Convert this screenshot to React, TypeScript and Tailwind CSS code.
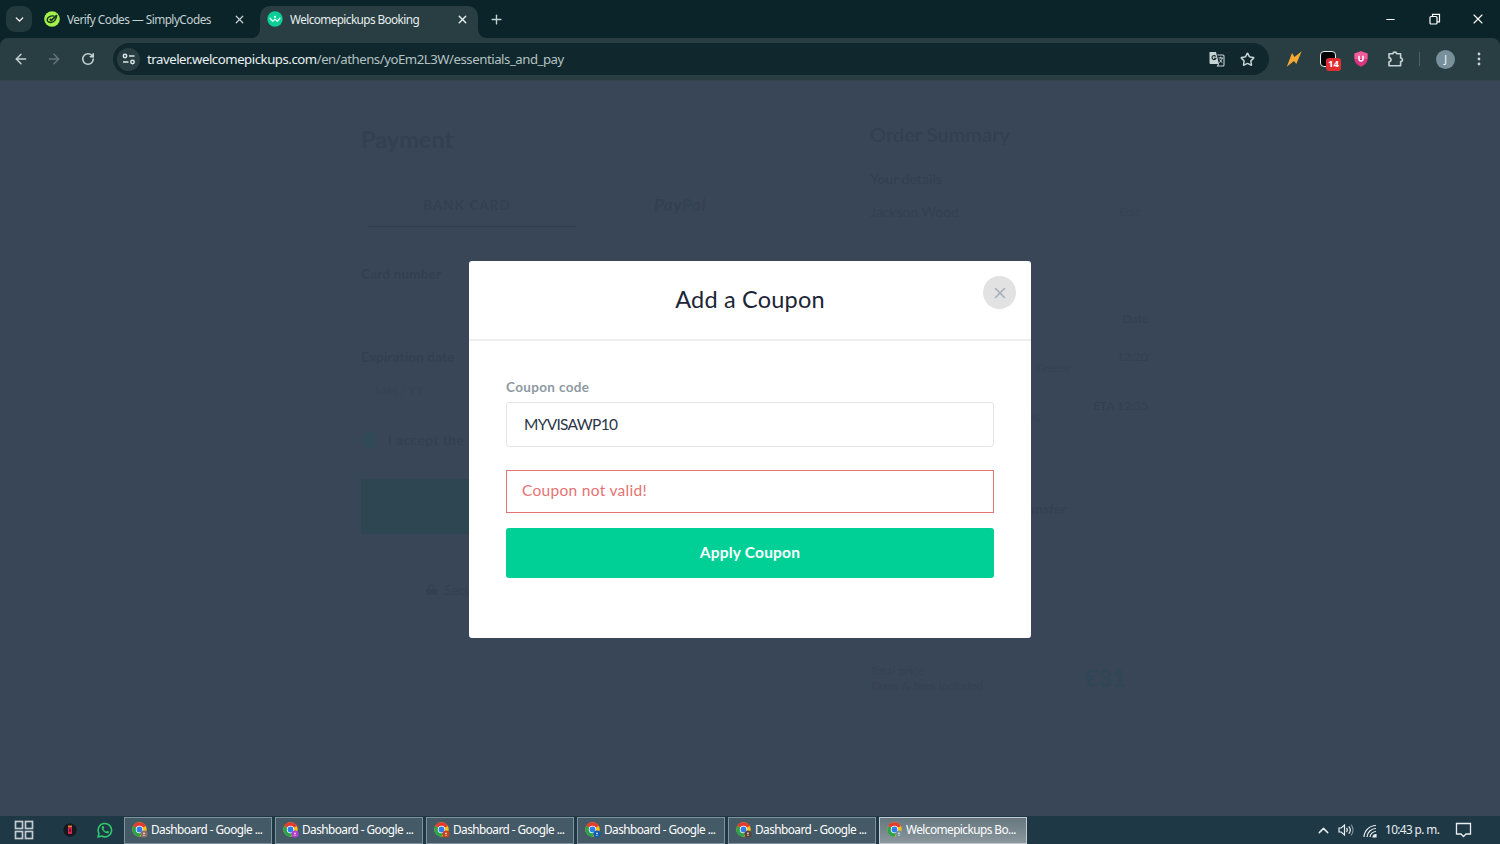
import type { ReactNode } from "react";
import { ArrowLeft, ArrowRight, ChevronDown, ChevronUp, Minus, Plus, RotateCw, Star, X } from "lucide-react";

const windows = [
  { title: "Dashboard - Google ...", badge: "#8d6e63" },
  { title: "Dashboard - Google ...", badge: "#b23bd0" },
  { title: "Dashboard - Google ...", badge: "#c8401c" },
  { title: "Dashboard - Google ...", badge: "#0b5cad" },
  { title: "Dashboard - Google ...", badge: "#5d4037" },
  { title: "Welcomepickups Bo...", badge: "#78909c", active: true },
];

function ChromeIcon({ badge }: { badge: string }) {
  return (
    <svg width="16" height="16" viewBox="0 0 16 16" className="shrink-0">
      <circle cx="7.5" cy="7.5" r="7.2" fill="#fbc116" />
      <path d="M7.5 7.5 1.2 4A7.2 7.2 0 0 1 13.8 4Z" fill="#e33b2e" />
      <path d="M7.5 7.5 1.2 4A7.2 7.2 0 0 0 7.5 14.7L10.5 9.2Z" fill="#2ba24c" />
      <circle cx="7.5" cy="7.5" r="3.7" fill="#fff" />
      <circle cx="7.5" cy="7.5" r="2.9" fill="#2f7de9" />
      <circle cx="12" cy="12" r="3.6" fill={badge} />
      <circle cx="12" cy="11.3" r="0.9" fill="#e8e0dc" />
      <path d="M10.5 13.5a1.600 1.300 0 0 1 3 0Z" fill="#e8e0dc" />
    </svg>
  );
}

function SimplyCodesIcon() {
  return (
    <svg width="16" height="16" viewBox="0 0 16 16" className="shrink-0">
      <circle cx="8" cy="8" r="7.8" fill="#a6f04a" />
      <path d="M10.500 5.200C7 4.200 3.300 6 3.200 8.700c0 2.800 4 3.500 6.500 1.800C12 9 12.200 7.200 12.600 4.600" fill="none" stroke="#14351f" strokeWidth="1.400" />
      <path d="m5.800 7.800 1.400 1.700L13 4.200" fill="none" stroke="#14351f" strokeWidth="1.700" />
    </svg>
  );
}

function WelcomeIcon() {
  return (
    <svg width="16" height="16" viewBox="0 0 16 16" className="shrink-0">
      <circle cx="8" cy="8" r="7.700" fill="#0bce96" />
      <path d="M3 7.200 5.700 10.300 8 8.200l2.300 2.100L13 7.200" fill="none" stroke="#d5fff0" strokeWidth="1.300" strokeLinecap="round" strokeLinejoin="round" />
      <circle cx="8" cy="5.900" r="1.100" fill="#d5fff0" />
    </svg>
  );
}

function TabStrip() {
  return (
    <div className="flex h-[38px] items-start bg-[#0a2429] text-[11.800px] text-[#c3d0d2]">
      <button className="mt-[6px] ml-[6px] flex h-[26px] w-[26px] items-center justify-center rounded-[9px] bg-[#22393d]">
        <ChevronDown size={13} strokeWidth={2.500} className="text-white" />
      </button>
      <div className="flex h-[38px] w-[219px] items-center pl-[12px]">
        <SimplyCodesIcon />
        <span className="mt-px ml-[7px] grow whitespace-nowrap tracking-[-0.530px]">Verify Codes — SimplyCodes</span>
        <X size={13} strokeWidth={2.300} className="mr-[5px]" />
      </div>
      <svg width="9" height="32" viewBox="0 0 9 32" className="mt-[6px]">
        <path d="M9 22v10H0c6 0 9-4 9-10Z" fill="#293e42" />
      </svg>
      <div className="mt-[6px] flex h-[32px] w-[218px] items-center rounded-t-[10px] bg-[#293e42] pb-[6px] pl-[7px] text-[#e6eeef]">
        <WelcomeIcon />
        <span className="mt-px ml-[7px] grow whitespace-nowrap tracking-[-0.600px]">Welcomepickups Booking</span>
        <X size={13} strokeWidth={2.500} className="mr-[9px]" />
      </div>
      <svg width="9" height="32" viewBox="0 0 9 32" className="mt-[6px]">
        <path d="M0 22v10h9c-6 0-9-4-9-10Z" fill="#293e42" />
      </svg>
      <Plus size={15} strokeWidth={2.200} className="mt-[12px] ml-[2px]" />
      <div className="ml-auto flex h-[38px] items-center text-white">
        <Minus size={13} strokeWidth={1.800} />
        <svg width="12" height="12" viewBox="0 0 12 12" className="ml-[32px]" fill="none" stroke="currentColor" strokeWidth="1.200">
          <rect x="1" y="3.500" width="7" height="7.500" rx="1" />
          <path d="M3.500 3.500V1.300h7v7.500H8" />
        </svg>
        <X size={16} strokeWidth={1.700} className="mr-[14px] ml-[29px]" />
      </div>
    </div>
  );
}

function Toolbar() {
  return (
    <div className="bg-[#0a2429]">
      <div className="flex h-[43px] items-center rounded-t-[8px] border-b border-[#34454c] bg-[#293e42] text-[#c6d2d4]">
        <ArrowLeft size={16} strokeWidth={2.200} className="ml-[13px]" />
        <ArrowRight size={16} strokeWidth={2.200} className="ml-[17px] text-[#64767a]" />
        <RotateCw size={14} strokeWidth={2.700} className="ml-[19px]" />
        <div className="ml-[18px] flex h-[32px] w-[1156px] items-center rounded-full bg-[#10282d] pl-[4px]">
          <div className="flex h-[23px] w-[23px] items-center justify-center rounded-full bg-[#293e42]">
            <svg width="14" height="12" viewBox="0 0 14 12" fill="none" stroke="#dce6e7" strokeWidth="1.500">
              <circle cx="3" cy="3" r="1.700" />
              <path d="M7 3h5.500M1 9h5.500" />
              <circle cx="10.500" cy="9" r="1.700" />
            </svg>
          </div>
          <p className="mt-px ml-[7px] text-[13.200px] tracking-[-0.460px] whitespace-nowrap text-[#b5c1c3]">
            <span className="text-[#e9f0f1]">traveler.welcomepickups.com</span>/en/athens/yoEm2L3W/essentials_and_pay
          </p>
          <svg width="16" height="16" viewBox="0 0 16 16" className="ml-auto">
            <path d="M.5 1h6.500l3 12H1.500a1 1 0 0 1-1-1Z" fill="#c6d2d4" />
            <path d="M6.700 5.500A2 2 0 1 0 6.900 7.300H5" fill="none" stroke="#10282d" strokeWidth="1.100" />
            <path d="M8.500 4H14a1 1 0 0 1 1 1v9a1 1 0 0 1-1 1H8.500l1-2" fill="none" stroke="#c6d2d4" strokeWidth="1.100" />
            <path d="M9.500 7h4.500M11.700 5.800V7M13.200 7c-.5 2.200-1.600 3.700-3 4.600M10.700 8.500c.7 1.300 1.600 2.400 2.800 3.300" fill="none" stroke="#c6d2d4" />
          </svg>
          <Star size={15} strokeWidth={2.400} className="mr-[14px] ml-[15px]" />
        </div>
        <svg width="16" height="16" viewBox="0 0 16 16" className="ml-[17px]">
          <path d="M6 2 .8 15.700 8 10l2.300 3L15.700.300 8.500 6Z" fill="#f4a933" />
        </svg>
        <div className="relative ml-[18px] h-[16px] w-[16px] rounded-[4px] border border-[#e9eded] bg-black">
          <span className="absolute top-[6px] left-[5px] flex h-[13px] w-[15px] items-center justify-center rounded-[3px] bg-[#e02f31] text-[9.500px] font-bold text-white">
            14
          </span>
        </div>
        <svg width="14" height="16" viewBox="0 0 14 16" className="ml-[18px]">
          <path d="M7 .3 13.500 2.500V8c0 3.600-2.500 6-6.500 7.700C3 14 .5 11.600.5 8V2.500Z" fill="#d93580" />
          <path d="M7 .3 13.500 2.500V8H.5V2.500Z" fill="#f25c9b" />
          <path d="M5 4.800V8a2 2 0 0 0 4 0V4.800" fill="none" stroke="#fff" strokeWidth="1.500" />
        </svg>
        <svg width="17" height="17" viewBox="0 0 17 17" className="ml-[19px]" fill="none" stroke="currentColor" strokeWidth="1.600" strokeLinejoin="round">
          <path d="M2 2.800h4c0-2.200 3.600-2.200 3.600 0h4v4.200c2.400 0 2.400 3.600 0 3.600v4.200H2v-4c2.600 0 2.600-3.900 0-3.900Z" />
        </svg>
        <div className="ml-[15px] h-[14px] w-px bg-[#4d6064]" />
        <div className="ml-[16px] flex h-[19px] w-[19px] items-center justify-center rounded-full bg-[#78909c] text-[10px] text-white">J</div>
        <svg width="4" height="16" viewBox="0 0 4 16" className="ml-[22px]" fill="currentColor">
          <circle cx="2" cy="3" r="1.400" />
          <circle cx="2" cy="8" r="1.400" />
          <circle cx="2" cy="13" r="1.400" />
        </svg>
      </div>
    </div>
  );
}

function PaymentForm() {
  return (
    <section className="ml-[361px] w-[435px] shrink-0 pt-[40px] text-[13.500px] font-bold">
      <h1 className="h-[36px] text-[23.500px] leading-[36px]">Payment</h1>
      <div className="mt-[27px] flex h-[43px] pl-[7px] leading-[42px]">
        <div className="w-[208px] border-b border-[#303e4f] pr-[10px] text-center font-semibold tracking-[1.100px]">BANK CARD</div>
        <div className="w-[208px] text-center text-[17px] tracking-[0.600px] italic">
          Pay<span className="text-[#354254]">Pal</span>
        </div>
      </div>
      <p className="mt-[37px] leading-[20px] tracking-[0.200px]">Card number</p>
      <p className="mt-[63px] leading-[20px] tracking-[0.150px]">Expiration date</p>
      <p className="mt-[15px] pl-[14px] text-[12px] leading-[18px] font-normal text-[#364355]">MM / YY</p>
      <div className="mt-[29px] flex items-center gap-[11px] text-[14px] leading-[22px] font-normal tracking-[0.400px]">
        <span className="h-[16px] w-[16px] rounded-full bg-[#304a58]" />I accept the Terms
      </div>
      <div className="mt-[28px] h-[55px] rounded-[3px] bg-[#2d4652]" />
      <div className="mt-[47px] flex items-center gap-[6px] pl-[64px] leading-[18px] font-normal text-[#344153]">
        <svg width="13" height="14" viewBox="0 0 13 14" fill="#344153">
          <path d="M3.500 6V4a3 3 0 0 1 6 0v2H12v6H1V6Zm1.500 0h3V4a1.500 1.500 0 0 0-3 0Z" />
        </svg>
        Secure payment
      </div>
    </section>
  );
}

function SummaryTime({ value }: { value: string }) {
  return <p className="text-right leading-[20px] text-[#324051]">{value}</p>;
}

function OrderSummary() {
  return (
    <section className="ml-[74px] w-[278px] shrink-0 pt-[38px] text-[12px] text-[#334152]">
      <h2 className="text-[20px] leading-[30px] font-semibold text-[#324051]">Order Summary</h2>
      <p className="mt-[20px] text-[14px] leading-[20px] font-semibold text-[#324051]">Your details</p>
      <div className="mt-[13px] flex justify-between pr-[8px] text-[14px] leading-[20px]">
        <span>Jackson Wood</span>
        <span className="text-[12px] text-[#364355]">Edit</span>
      </div>
      <div className="mt-[87px]">
        <SummaryTime value="Date" />
      </div>
      <div className="mt-[18px]">
        <SummaryTime value="12:20" />
      </div>
      <p className="pl-[166px] text-[11px] leading-[1px] text-[#354254]">Greece</p>
      <div className="mt-[28px]">
        <SummaryTime value="ETA 12:35" />
      </div>
      <p className="pl-[158px] text-[11px] leading-[1px] text-[#354254]">es,</p>
      <p className="mt-[82px] pl-[146px] text-[13.500px] leading-[20px] font-bold tracking-[0.200px]">Transfer</p>
      <div className="mt-[144px] flex items-center justify-between pr-[22px]">
        <p className="text-[12px] leading-[15px] text-[#354254]">
          Total price
          <br />
          Taxes & fees included
        </p>
        <span className="text-[24px] leading-[30px] font-bold text-[#2f4756]">€31</span>
      </div>
    </section>
  );
}

function CouponModal() {
  return (
    <div className="absolute top-[180px] left-[469px] h-[377px] w-[562px] rounded-[3px] bg-white">
      <header className="relative flex h-[80px] items-center justify-center border-b-2 border-[#eeeeee]">
        <h2 className="text-[23.500px] tracking-[0.200px] text-[#1c2536]">Add a Coupon</h2>
        <button className="absolute top-[15px] right-[15px] flex h-[33px] w-[33px] items-center justify-center rounded-full bg-[#e2e2e2]">
          <X size={18} strokeWidth={2} className="text-[#a4aeb8]" />
        </button>
      </header>
      <form className="px-[37px] pt-[36px]">
        <label className="block text-[13.500px] leading-[20px] font-bold tracking-[0.350px] text-[#8e99a3]">Coupon code</label>
        <div className="mt-[5px] flex h-[45px] items-center rounded-[3px] border border-[#e3e5e8] pl-[17px] text-[15.500px] tracking-[-0.700px] text-[#2a3648]">
          MYVISAWP10
        </div>
        <div className="mt-[23px] flex h-[43px] items-center border border-[#e57373] pb-px pl-[15px] text-[15.500px] tracking-[0.300px] text-[#e57373]">
          Coupon not valid!
        </div>
        <button type="button" className="mt-[15px] h-[50px] w-full rounded-[3px] bg-[#00d096] text-[15.500px] font-bold tracking-[0.200px] text-white">
          Apply Coupon
        </button>
      </form>
    </div>
  );
}

function Tray({ children }: { children: ReactNode }) {
  return <div className="ml-auto flex items-center text-[#e8eef0]">{children}</div>;
}

function Taskbar() {
  return (
    <div className="flex h-[28px] items-center bg-[#1f3846]">
      <svg width="20" height="20" viewBox="0 0 20 20" className="ml-[14px]" fill="none" stroke="#c3cbcf" strokeWidth="1.700">
        <rect x="1.500" y="1.500" width="7" height="7" />
        <rect x="11.500" y="1.500" width="7" height="7" />
        <rect x="1.500" y="11.500" width="7" height="7" />
        <rect x="11.500" y="11.500" width="7" height="7" />
      </svg>
      <svg width="14" height="14" viewBox="0 0 14 14" className="ml-[29px]">
        <circle cx="7" cy="7" r="6.700" fill="#161a20" />
        <rect x="5" y="3.500" width="4" height="7.500" rx="1" fill="#dd2451" />
        <path d="M5 3.200h4" stroke="#f6a623" strokeWidth="1.200" />
        <path d="M7 5.500v3.500" stroke="#43101d" strokeWidth="1.200" />
      </svg>
      <svg width="16" height="16" viewBox="0 0 16 16" className="ml-[20px]">
        <path d="M1 15 2 11.400A6.700 6.700 0 1 1 4.600 14Z" fill="none" stroke="#2fc66d" strokeWidth="1.600" strokeLinejoin="round" />
        <path d="M5.300 4.200c-1.300 1.200-.3 3.600 1.300 5.200s4 2.600 5.200 1.300c.4-.6.2-1.100 0-1.200L10.100 8.700l-1 1C8 9.200 6.900 8.100 6.400 7l.9-1-.7-1.700c-.3-.5-.9-.4-1.300-.1Z" fill="#2fc66d" />
      </svg>
      <div className="ml-[11px] flex gap-[3px]">
        {windows.map((w, i) => (
          <div
            key={i}
            className={
              w.active
                ? "flex h-[27px] w-[148px] items-center border border-[#c3cbd0] bg-gradient-to-b from-[#66777f] to-[#8a979d] pl-[7px] text-white"
                : "flex h-[27px] w-[148px] items-center border border-[#80929b] bg-[#455a67] pl-[7px] text-white"
            }
          >
            <ChromeIcon badge={w.badge} />
            <span className="ml-[3px] text-[11.800px] tracking-[-0.540px] whitespace-nowrap">{w.title}</span>
          </div>
        ))}
      </div>
      <Tray>
        <ChevronUp size={17} strokeWidth={2} />
        <svg width="17" height="16" viewBox="0 0 17 16" className="ml-[6px]" fill="none" stroke="currentColor" strokeWidth="1.200">
          <path d="M1 6h2.200L6.500 3v10L3.200 10H1Z" />
          <path d="M8.500 6c1 1.200 1 2.800 0 4M10.700 4.300c2 2.200 2 5.200 0 7.400" />
          <path d="M13 2.700c2.700 3 2.700 7.600 0 10.600" stroke="#7e9099" />
        </svg>
        <svg width="14" height="14" viewBox="0 0 14 14" className="mt-[2px] ml-[8px]" fill="none" stroke="currentColor" strokeWidth="1.200">
          <path d="M1 13A12 12 0 0 1 13 1.500M4 13a9 9 0 0 1 9-8.500M7 13a6 6 0 0 1 6-5.500" />
          <path d="M10 13a3 3 0 0 1 3-2.500V13Z" fill="currentColor" />
        </svg>
        <span className="ml-[8px] w-[54px] text-[11.800px] tracking-[-0.600px] whitespace-nowrap">10:43 p. m.</span>
        <svg width="17" height="16" viewBox="0 0 17 16" className="mr-[28px] ml-[16px]" fill="none" stroke="currentColor" strokeWidth="1.300">
          <path d="M1.500 1.500h14v10.500h-4.500L8.500 14.500 6 12H1.500Z" />
        </svg>
      </Tray>
    </div>
  );
}

export default function App() {
  return (
    <div className="flex h-[844px] w-[1500px] flex-col overflow-hidden font-['Noto_Sans','Open_Sans',sans-serif]">
      <TabStrip />
      <Toolbar />
      <main className="relative flex h-[735px] overflow-hidden bg-[#394658] font-['Lato',sans-serif] text-[#324051]">
        <PaymentForm />
        <OrderSummary />
        <CouponModal />
      </main>
      <Taskbar />
    </div>
  );
}
